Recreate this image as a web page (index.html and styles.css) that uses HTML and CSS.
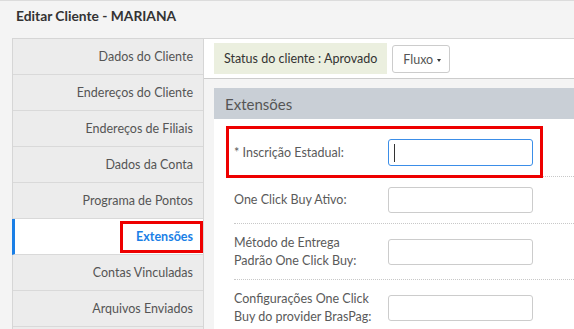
FILE: index.html
```html
<!DOCTYPE html>
<html lang="pt-BR">
<head>
  <meta charset="UTF-8">
  <title>Editar Cliente - MARIANA</title>
  <link rel="stylesheet" href="styles.css">
</head>
<body class="body">
  <h1 class="title">Editar Cliente - MARIANA</h1>
  <div class="layout">
    <!-- Menu lateral com as abas do cliente -->
    <ul class="menu">
      <li class="menu-item">Dados do Cliente</li>
      <li class="menu-item">Endereços do Cliente</li>
      <li class="menu-item">Endereços de Filiais</li>
      <li class="menu-item">Dados da Conta</li>
      <li class="menu-item">Programa de Pontos</li>
      <li class="menu-item menu-item--active"><span class="mark">Extensões</span></li>
      <li class="menu-item">Contas Vinculadas</li>
      <li class="menu-item">Arquivos Enviados</li>
    </ul>
    <div class="content">
      <div class="toolbar">
        <div class="status">Status do cliente : Aprovado</div>
        <button class="flow-button">Fluxo <span class="caret"></span></button>
      </div>
      <div class="panel">
        <div class="panel-heading">Extensões</div>
        <div class="panel-body">
          <div class="row row--marked">
            <label class="row-label">* Inscrição Estadual:</label>
            <div class="input input--focus"><span class="cursor"></span></div>
          </div>
          <div class="row">
            <label class="row-label">One Click Buy Ativo:</label>
            <div class="input"></div>
          </div>
          <div class="row">
            <label class="row-label">Método de Entrega Padrão One Click Buy:</label>
            <div class="input"></div>
          </div>
          <div class="row">
            <label class="row-label">Configurações One Click Buy do provider BrasPag:</label>
            <div class="input"></div>
          </div>
        </div>
      </div>
    </div>
  </div>
</body>
</html>
```

FILE: styles.css
```css
.body {
  margin: 0;
  height: 329px;
  overflow: hidden;
  background-color: #f4f4f4;
  border-top: 1px solid #dcdcdc;
  font-family: Lato, "Noto Sans", sans-serif;
  font-size: 12.5px;
  color: #555555;
}
.title {
  margin: 0;
  padding: 5px 0 0 16px;
  height: 32px;
  font-size: 13.8px;
  font-weight: 700;
  line-height: 20px;
  color: #333333;
}
.layout {
  display: flex;
  padding-left: 12px;
}
.menu {
  margin: 0;
  padding: 0;
  width: 190px;
  list-style: none;
  border-top: 1px solid #d6d6d6;
  border-left: 1px solid #d6d6d6;
  border-right: 1px solid #d6d6d6;
  background-color: #ececec;
  flex-shrink: 0;
}
.menu-item {
  height: 35px;
  display: flex;
  align-items: center;
  justify-content: flex-end;
  padding-right: 10px;
  border-bottom: 1px solid #d9d9d9;
  color: #555555;
}
.menu-item--active {
  margin-left: -1px;
  padding-right: 0;
  background-color: #ffffff;
  border-left: 3px solid #1a7fe6;
  font-weight: 700;
  color: #1a7fe6;
}
.mark {
  height: 26px;
  display: flex;
  align-items: center;
  padding: 0 7px 0 13px;
  border: 3px solid #ee0000;
}
.content {
  flex: 1;
}
.toolbar {
  height: 41px;
  display: flex;
  align-items: flex-start;
  padding: 4px 0 0 10px;
  box-sizing: border-box;
  background-color: #ffffff;
  border-top: 1px solid #d6d6d6;
  border-bottom: 1px solid #cccccc;
}
.status {
  height: 31px;
  padding: 0 10px;
  display: flex;
  align-items: center;
  background-color: #ebefdf;
  color: #333333;
}
.flow-button {
  margin: 2px 0 0 5px;
  height: 28px;
  padding: 0 8px 0 10px;
  background: #ffffff;
  border: 1px solid #cccccc;
  border-radius: 3px;
  font-family: inherit;
  font-size: 12.5px;
  color: #555555;
}
.caret {
  display: inline-block;
  margin-left: 1px;
  vertical-align: middle;
  border-top: 3px solid #333333;
  border-left: 2.5px solid transparent;
  border-right: 2.5px solid transparent;
}
.panel {
  margin: 9px 0 0 10px;
  background-color: #ffffff;
}
.panel-heading {
  height: 31px;
  padding-left: 11px;
  display: flex;
  align-items: center;
  background-color: #c9cfd6;
  font-size: 15px;
  color: #555555;
}
.panel-body {
  padding: 10px 0 0 20px;
}
.row {
  position: relative;
  display: flex;
  align-items: center;
  padding: 10px 0;
  border-bottom: 1px dotted #c8c8c8;
}
.row--marked::after {
  content: "";
  position: absolute;
  top: -3px;
  left: -8px;
  width: 317px;
  height: 52px;
  box-sizing: border-box;
  border: 3px solid #ee0000;
}
.row-label {
  width: 144px;
  margin-right: 10px;
  line-height: 17.5px;
  color: #5a5a5a;
}
.input {
  width: 145px;
  height: 26px;
  box-sizing: border-box;
  border: 1px solid #cccccc;
  border-radius: 3px;
  flex-shrink: 0;
}
.input--focus {
  height: 27px;
  border-color: #3b8ee8;
  padding: 4px 0 0 5px;
}
.cursor {
  display: block;
  width: 1px;
  height: 18px;
  background-color: #333333;
}
```
